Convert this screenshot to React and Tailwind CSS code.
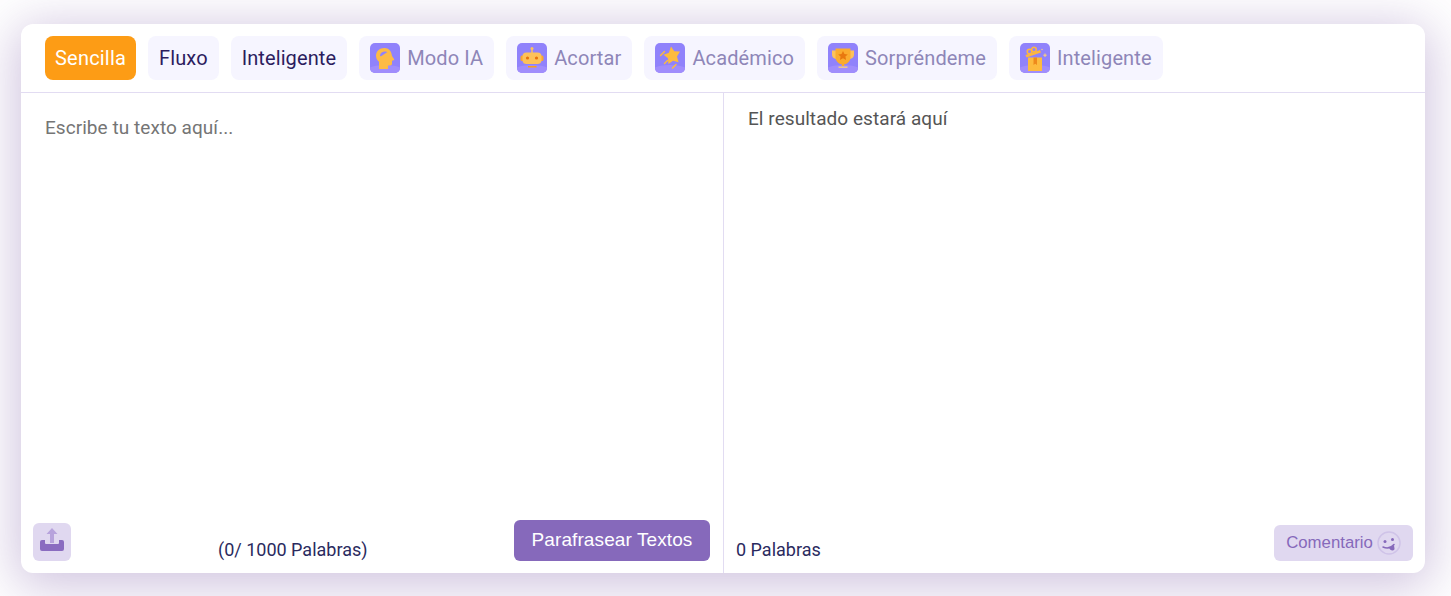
import React from 'react';

const Tile = ({ children }) => (
  <svg width="30" height="30" viewBox="0 0 30 30" className="shrink-0 rounded-[5px]">
    <rect width="30" height="30" fill="#9082fb" />
    <ellipse cx="15" cy="33" rx="24" ry="11" fill="#a08dfc" />
    {children}
  </svg>
);

const HeadIcon = () => (
  <Tile>
    <path d="M14.500 5c-5 0-8.500 3.300-8.500 7.800 0 2.700 1.200 4.500 3 5.900V26h9v-3.500h2.300c1 0 1.700-.7 1.700-1.700v-3l1.700-.6c.5-.2.600-.7.300-1.100l-2-3C21.500 8 18.800 5 14.500 5z" fill="#fdbb45" />
    <path d="M10 12.500c.3-2.400 2.500-4 5-4 1 0 1.800.2 2.400.6l-6 4c-.8.500-1.500.2-1.400-.6z" fill="#9082fb" />
  </Tile>
);

const RobotIcon = () => (
  <Tile>
    <circle cx="15" cy="5.500" r="1.500" fill="#fdc25a" />
    <rect x="14.300" y="6" width="1.400" height="4" fill="#fdc25a" />
    <rect x="3.500" y="12.500" width="23" height="5.500" rx="1.500" fill="#f9a72b" />
    <rect x="5.500" y="9.500" width="19" height="11.500" rx="4" fill="#fdc25a" />
    <circle cx="10.500" cy="15" r="1.600" fill="#e8720c" />
    <circle cx="19.500" cy="15" r="1.600" fill="#e8720c" />
    <rect x="11" y="23" width="8.500" height="1.500" fill="#fb9f18" />
  </Tile>
);

const StarIcon = () => (
  <Tile>
    <path d="M16 3.500l3.300 4.700 5.700.4-3 5 1.600 5.600-5.600-1.400-4.600 3.200-.4-5.800-4.500-3.500 5.400-2z" fill="#fdbb3e" />
    <g stroke="#fdbb3e" strokeWidth="1.400" strokeLinecap="round">
      <path d="M5.500 12.500l4-4" />
      <path d="M9.500 20.500l3-3" />
      <path d="M17.500 25l3.500-3.500" />
    </g>
  </Tile>
);

const TrophyIcon = () => (
  <Tile>
    <path d="M4 7.500h22v4c0 3-2.300 4.500-5 4.500H9c-2.700 0-5-1.500-5-4.500z" fill="#fdc25a" />
    <path d="M7.500 5.500h15v8.500c0 4.200-3.300 7.500-7.500 7.500s-7.500-3.300-7.500-7.500z" fill="#fbab2e" />
    <path d="M15 8l1.500 3 3.300.4-2.400 2.200.7 3.300-3.100-1.700-3.100 1.700.7-3.300-2.400-2.200 3.300-.4z" fill="#e8780f" />
    <rect x="13.800" y="20.500" width="2.400" height="2.500" fill="#fbab2e" />
    <rect x="10.500" y="23.500" width="9" height="1.300" fill="#fdd27a" />
  </Tile>
);

const GiftIcon = () => (
  <Tile>
    <path d="M8 14.500h14V28H8z" fill="#fdbb3e" />
    <path d="M13.500 14.500h3.500v7.500l-1.750-1.300-1.750 1.300z" fill="#ee8a1c" />
    <path d="M5.500 12l14.500-5 1 2.600-14.500 5z" fill="#fdb63f" />
    <circle cx="9.500" cy="8.500" r="2.300" fill="none" stroke="#fdb63f" strokeWidth="1.500" />
    <circle cx="14" cy="6.500" r="2.300" fill="none" stroke="#fdb63f" strokeWidth="1.500" />
    <path d="M25 10.500v3.500M23.300 12.200h3.400" stroke="#fdd27a" strokeWidth="1" />
    <circle cx="22" cy="6.500" r=".7" fill="#fdd27a" />
  </Tile>
);

const plainTabs = ['Fluxo', 'Inteligente'];

const iconTabs = [
  { label: 'Modo IA', icon: <HeadIcon /> },
  { label: 'Acortar', icon: <RobotIcon /> },
  { label: 'Académico', icon: <StarIcon /> },
  { label: 'Sorpréndeme', icon: <TrophyIcon /> },
  { label: 'Inteligente', icon: <GiftIcon /> },
];

export default function App() {
  return (
    <div className="h-[596px] overflow-hidden bg-white pl-[21px] pr-[26px] pt-6 font-['Roboto',sans-serif]">
      <div className="flex h-[549px] flex-col rounded-xl bg-white shadow-[0_8px_50px_6px_rgba(100,60,150,0.3)]">
        <div className="flex h-[69px] shrink-0 items-start gap-3 border-b border-[#e2dcf2] pl-6 pt-3 text-xl tracking-[0.1px]">
          <button className="h-11 rounded-lg bg-[#fd9c15] px-2.5 tracking-[0.2px] text-white">Sencilla</button>
          {plainTabs.map((t) => (
            <button key={t} className="h-11 rounded-lg bg-[#f6f5ff] px-[11px] text-[#2c1c5e]">{t}</button>
          ))}
          {iconTabs.map((t) => (
            <button key={t.label} className="flex h-11 items-center gap-[7px] rounded-lg bg-[#f6f5ff] px-[11px] tracking-[0.12px] text-[#8e86b8]">
              {t.icon}
              {t.label}
            </button>
          ))}
        </div>
        <div className="flex min-h-0 flex-1">
          <div className="flex w-[703px] flex-col border-r border-[#e2dcf2]">
            <div className="flex-1 px-6 pt-6 text-[19px] leading-[22px] tracking-[0.05px] text-[#757575]">Escribe tu texto aquí...</div>
            <div className="flex items-end pb-3 pl-3 pr-[13px]">
              <button className="flex size-[38px] items-center justify-center rounded-md bg-[#e0d8f0] pb-1">
                <svg width="24" height="24" viewBox="0 0 24 24">
                  <path d="M12 0l5.500 6H14v9h-4V6H6.500z" fill="#b7a3dc" />
                  <path d="M0 14a2 2 0 0 1 2-2h3v3a1 1 0 0 0 1 1h12a1 1 0 0 0 1-1v-3h3a2 2 0 0 1 2 2v7a2 2 0 0 1-2 2H2a2 2 0 0 1-2-2z" fill="#8a6cc0" />
                </svg>
              </button>
              <span className="ml-[147px] text-lg leading-[22px] text-[#2a2a5e]">(0/ 1000 Palabras)</span>
              <button className="ml-auto h-[41px] w-[196px] rounded-md bg-[#8669bb] text-center font-['Liberation_Sans',sans-serif] text-[19px] tracking-[0.1px] text-white">
                Parafrasear Textos
              </button>
            </div>
          </div>
          <div className="flex flex-1 flex-col">
            <div className="flex-1 px-6 pt-[15px] text-[19px] leading-[22px] tracking-[0.06px] text-[#555555]">El resultado estará aquí</div>
            <div className="flex items-end justify-between px-3 pb-3">
              <span className="text-lg leading-[22px] text-[#2a2a5e]">0 Palabras</span>
              <button className="flex h-9 w-[139px] items-center justify-center gap-1 rounded-md bg-[#e0d8f0] font-['Liberation_Sans',sans-serif] text-[16.8px] text-[#8669bb]">
                Comentario
                <svg width="24" height="24" viewBox="0 0 24 24" fill="none">
                  <circle cx="12" cy="12" r="11" stroke="#cfc3e8" strokeWidth="1.500" />
                  <circle cx="8" cy="10.500" r="1.500" fill="#8669bb" />
                  <circle cx="15.500" cy="8.500" r="1.500" fill="#8669bb" />
                  <path d="M6 16c3.500 1.500 8 1 11-2.500" stroke="#8669bb" strokeWidth="1.500" strokeLinecap="round" />
                  <path d="M12 16.500l5-2 .5 3c.2 1.200-.8 2-2 2-1.500 0-3-1.200-3.500-3z" fill="#8669bb" />
                </svg>
              </button>
            </div>
          </div>
        </div>
      </div>
    </div>
  );
}
